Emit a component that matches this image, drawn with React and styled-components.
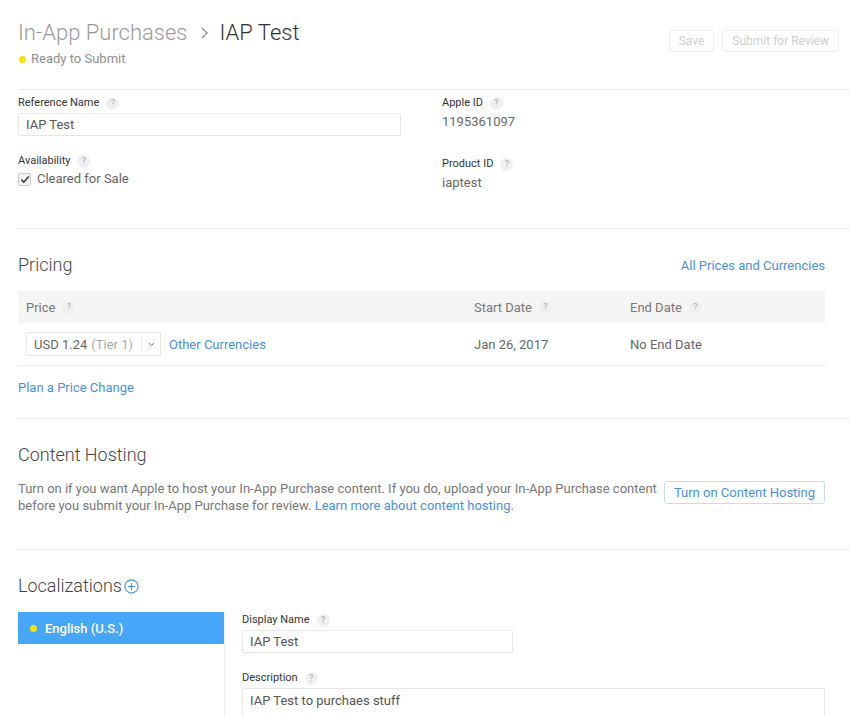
import React from "react";
import styled, { createGlobalStyle } from "styled-components";

const Global = createGlobalStyle`
  html, body {
    margin: 0;
    padding: 0;
    background: #fff;
  }
  body {
    font-family: Roboto, Inter, "Liberation Sans", sans-serif;
    color: #555;
    font-size: 13px;
    -webkit-font-smoothing: antialiased;
  }
`;

const blue = "#4a90e2";

const Page = styled.div`
  padding-left: 18px;
  width: 832px;
`;

const Header = styled.header`
  display: flex;
  justify-content: space-between;
  align-items: flex-start;
  height: 90px;
  padding-top: 20px;
  box-sizing: border-box;
  border-bottom: 1px solid #ececec;
  padding-right: 11px;
`;

const Crumbs = styled.h1`
  margin: 0;
  font-size: 22px;
  line-height: 26px;
  font-weight: 300;
  color: #333;
  display: flex;
  align-items: center;
`;

const Parent = styled.span`
  color: #9b9b9b;
`;

const Chevron = styled.span`
  display: inline-block;
  width: 7px;
  height: 7px;
  border-top: 1.5px solid #777;
  border-right: 1.5px solid #777;
  transform: rotate(45deg);
  margin: 0 14px 0 10px;
`;

const Status = styled.div`
  margin-top: 5px;
  display: flex;
  align-items: center;
  font-size: 13px;
  line-height: 16px;
  color: #8e8e8e;
`;

const Dot = styled.span`
  width: 7px;
  height: 7px;
  border-radius: 50%;
  background: #f5e300;
  margin: 0 5px 0 1px;
  flex: none;
`;

const Actions = styled.div`
  display: flex;
  gap: 8px;
  margin-top: 10px;
`;

const GhostButton = styled.button`
  height: 22px;
  padding: 0 9px;
  font: inherit;
  font-size: 12px;
  color: #cfcfcf;
  background: #fff;
  border: 1px solid #eee;
  border-radius: 3px;
  white-space: nowrap;
`;

const Section = styled.section`
  padding: ${(p) => p.$pad || "25px 25px 22px 0"};
  border-bottom: ${(p) => (p.$last ? "none" : "1px solid #ececec")};
  min-height: ${(p) => p.$min || "auto"};
  box-sizing: border-box;
`;

const InfoGrid = styled.div`
  display: grid;
  grid-template-columns: 383px 1fr;
  column-gap: 41px;
`;

const Field = styled.div`
  margin-bottom: ${(p) => p.$mb || "0"};
`;

const Label = styled.div`
  display: flex;
  align-items: center;
  font-size: 11px;
  line-height: 14px;
  color: #333;
  font-weight: 400;
  margin-bottom: ${(p) => p.$mb || "3px"};
`;

const Help = styled.span`
  display: inline-flex;
  align-items: center;
  justify-content: center;
  width: 13px;
  height: 13px;
  border-radius: 50%;
  background: #f0f0f0;
  color: #aaa;
  font-size: 9px;
  font-weight: 400;
  margin-left: 7px;
`;

const Input = styled.div`
  box-sizing: border-box;
  width: ${(p) => p.$w || "100%"};
  height: ${(p) => p.$h || "23px"};
  border: 1px solid #e6e6e6;
  border-radius: 2px;
  padding: ${(p) => (p.$area ? "4px 7px" : "0 7px")};
  display: flex;
  align-items: ${(p) => (p.$area ? "flex-start" : "center")};
  font-size: 13px;
  color: #555;
`;

const Value = styled.div`
  font-size: 13px;
  line-height: 16px;
  color: #666;
`;

const CheckRow = styled.label`
  display: flex;
  align-items: center;
  font-size: 13px;
  line-height: 16px;
  color: #666;
`;

const Box = styled.span`
  width: 11px;
  height: 11px;
  border: 1px solid #c9c9c9;
  background: #f3f3f3;
  border-radius: 2px;
  margin-right: 6px;
  display: inline-flex;
  align-items: center;
  justify-content: center;
`;

const TitleRow = styled.div`
  display: flex;
  justify-content: space-between;
  align-items: center;
  margin-bottom: ${(p) => p.$mb || "15px"};
`;

const H2 = styled.h2`
  margin: 0;
  font-size: 18px;
  line-height: 22px;
  font-weight: 300;
  color: #444;
  display: flex;
  align-items: center;
`;

const Link = styled.a`
  color: ${blue};
  text-decoration: none;
  font-size: 13px;
  cursor: pointer;
`;

const Table = styled.div`
  display: grid;
  grid-template-columns: 448px 156px 1fr;
`;

const Th = styled.div`
  background: #f5f5f5;
  height: 32px;
  display: flex;
  align-items: center;
  padding-left: 8px;
  font-size: 13px;
  color: #777;
`;

const Td = styled.div`
  height: 42px;
  border-bottom: 1px solid #eee;
  display: flex;
  align-items: center;
  padding-left: 8px;
  font-size: 13px;
  color: #666;
  gap: 8px;
`;

const Select = styled.div`
  box-sizing: border-box;
  width: 135px;
  height: 24px;
  border: 1px solid #e6e6e6;
  border-radius: 2px;
  display: flex;
  align-items: center;
  padding-left: 7px;
  color: #666;
`;

const Tier = styled.span`
  color: #aaa;
  margin-left: 4px;
  flex: 1;
`;

const Caret = styled.span`
  border-left: 1px solid #e6e6e6;
  height: 14px;
  width: 18px;
  display: flex;
  align-items: center;
  justify-content: center;
`;

const PlanLink = styled(Link)`
  display: block;
  margin-top: 14px;
  line-height: 16px;
`;

const HostRow = styled.div`
  display: flex;
  justify-content: space-between;
  align-items: flex-start;
`;

const Para = styled.p`
  margin: 0;
  width: 640px;
  font-size: 13px;
  line-height: 17px;
  color: #777;
`;

const OutlineButton = styled.button`
  height: 23px;
  padding: 0 9px;
  margin-top: 1px;
  font: inherit;
  font-size: 13px;
  color: ${blue};
  background: #fff;
  border: 1px solid #c7dcf3;
  border-radius: 3px;
  white-space: nowrap;
  flex: none;
`;

const LocalLayout = styled.div`
  display: flex;
`;

const Sidebar = styled.div`
  width: 206px;
  border-right: 1px solid #f0f0f0;
  min-height: 120px;
  flex: none;
`;

const LangItem = styled.div`
  height: 32px;
  background: #46a6f8;
  color: #fff;
  display: flex;
  align-items: center;
  padding-left: 12px;
  font-size: 13px;
  font-weight: 500;
`;

const LangDot = styled(Dot)`
  margin: 0 8px 0 0;
`;

const LocalForm = styled.div`
  flex: 1;
  padding: 1px 0 0 17px;
`;

const PlusIcon = () => (
  <svg width="15" height="15" viewBox="0 0 15 15" style={{ marginLeft: 2 }}>
    <circle cx="7.5" cy="7.5" r="6.6" fill="none" stroke={blue} strokeWidth="1.1" />
    <path d="M7.5 4v7M4 7.5h7" stroke={blue} strokeWidth="1.1" />
  </svg>
);

const HelpMark = () => <Help>?</Help>;

export default function App() {
  return (
    <Page>
      <Global />
      <Header>
        <div>
          <Crumbs>
            <Parent>In-App Purchases</Parent>
            <Chevron />
            IAP Test
          </Crumbs>
          <Status>
            <Dot />
            Ready to Submit
          </Status>
        </div>
        <Actions>
          <GhostButton>Save</GhostButton>
          <GhostButton>Submit for Review</GhostButton>
        </Actions>
      </Header>

      <Section $pad="6px 25px 0 0" $min="139px">
        <InfoGrid>
          <div>
            <Field $mb="18px">
              <Label>
                Reference Name <HelpMark />
              </Label>
              <Input>IAP Test</Input>
            </Field>
            <Field>
              <Label $mb="3px">
                Availability <HelpMark />
              </Label>
              <CheckRow>
                <Box>
                  <svg width="10" height="9" viewBox="0 0 10 9">
                    <path d="M1.2 4.6 3.8 7.2 8.8 1.4" fill="none" stroke="#333" strokeWidth="1.5" />
                  </svg>
                </Box>
                Cleared for Sale
              </CheckRow>
            </Field>
          </div>
          <div>
            <Field $mb="27px">
              <Label $mb="4px">
                Apple ID <HelpMark />
              </Label>
              <Value>1195361097</Value>
            </Field>
            <Field>
              <Label $mb="4px">
                Product ID <HelpMark />
              </Label>
              <Value>iaptest</Value>
            </Field>
          </div>
        </InfoGrid>
      </Section>

      <Section $pad="25px 25px 22px 0">
        <TitleRow>
          <H2>Pricing</H2>
          <Link>All Prices and Currencies</Link>
        </TitleRow>
        <Table>
          <Th>
            Price <HelpMark />
          </Th>
          <Th>
            Start Date <HelpMark />
          </Th>
          <Th>
            End Date <HelpMark />
          </Th>
          <Td>
            <Select>
              USD 1.24<Tier>(Tier 1)</Tier>
              <Caret>
                <svg width="7" height="5" viewBox="0 0 7 5">
                  <path d="M1 1l2.5 2.5L6 1" fill="none" stroke="#888" strokeWidth="1" />
                </svg>
              </Caret>
            </Select>
            <Link>Other Currencies</Link>
          </Td>
          <Td>Jan 26, 2017</Td>
          <Td>No End Date</Td>
        </Table>
        <PlanLink>Plan a Price Change</PlanLink>
      </Section>

      <Section $pad="25px 25px 35px 0">
        <TitleRow $mb="14px">
          <H2>Content Hosting</H2>
        </TitleRow>
        <HostRow>
          <Para>
            Turn on if you want Apple to host your In-App Purchase content. If you do, upload your
            In-App Purchase content before you submit your In-App Purchase for review.{" "}
            <Link>Learn more about content hosting</Link>.
          </Para>
          <OutlineButton>Turn on Content Hosting</OutlineButton>
        </HostRow>
      </Section>

      <Section $pad="25px 25px 0 0" $last>
        <TitleRow $mb="15px">
          <H2>
            Localizations
            <PlusIcon />
          </H2>
        </TitleRow>
        <LocalLayout>
          <Sidebar>
            <LangItem>
              <LangDot />
              English (U.S.)
            </LangItem>
          </Sidebar>
          <LocalForm>
            <Field $mb="18px">
              <Label>
                Display Name <HelpMark />
              </Label>
              <Input $w="271px">IAP Test</Input>
            </Field>
            <Field>
              <Label>
                Description <HelpMark />
              </Label>
              <Input $area $h="60px">
                IAP Test to purchaes stuff
              </Input>
            </Field>
          </LocalForm>
        </LocalLayout>
      </Section>
    </Page>
  );
}
